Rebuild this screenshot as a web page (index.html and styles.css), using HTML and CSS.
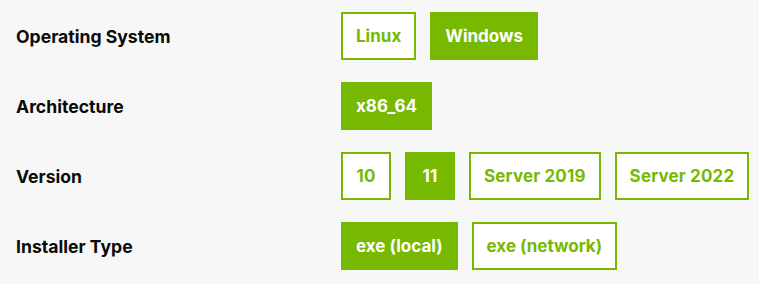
FILE: index.html
```html
<!DOCTYPE html>
<html lang="en">
<head>
    <meta charset="UTF-8">
    <meta name="viewport" content="width=device-width, initial-scale=1.0">
    <title>Select Target Platform</title>
    <link rel="stylesheet" href="styles.css">
</head>
<body>
    <div class="selector">
        <div class="row">
            <div class="label">Operating System</div>
            <div class="options">
                <button class="opt">Linux</button>
                <button class="opt active">Windows</button>
            </div>
        </div>
        <div class="row">
            <div class="label">Architecture</div>
            <div class="options">
                <button class="opt active">x86_64</button>
            </div>
        </div>
        <div class="row">
            <div class="label">Version</div>
            <div class="options versions">
                <button class="opt">10</button>
                <button class="opt active">11</button>
                <button class="opt">Server 2019</button>
                <button class="opt">Server 2022</button>
            </div>
        </div>
        <div class="row">
            <div class="label">Installer Type</div>
            <div class="options">
                <button class="opt active">exe (local)</button>
                <button class="opt">exe (network)</button>
            </div>
        </div>
    </div>
</body>
</html>
```
FILE: styles.css
```css
body {
    margin: 0;
    background-color: #f7f7f7;
    font-family: Inter, "Liberation Sans", Arial, sans-serif;
    color: #111;
}

.selector {
    display: flex;
    flex-direction: column;
    gap: 22px;
    padding: 12px 16px;
}

.row {
    display: flex;
    align-items: center;
}

.label {
    flex: none;
    width: 325px;
    font-size: 17.6px;
    font-weight: 700;
    color: #0a0a0a;
}

.options {
    display: flex;
    gap: 14px;
}

.opt {
    flex: none;
    min-width: 50px;
    height: 48px;
    padding: 0 13px;
    border: 2px solid #76b900;
    background-color: #fff;
    color: #76b900;
    font-family: inherit;
    font-size: 17px;
    font-weight: 700;
    white-space: nowrap;
    cursor: pointer;
}

.versions .opt {
    letter-spacing: 0.15px;
}

.opt.active {
    background-color: #76b900;
    color: #fff;
}
```
